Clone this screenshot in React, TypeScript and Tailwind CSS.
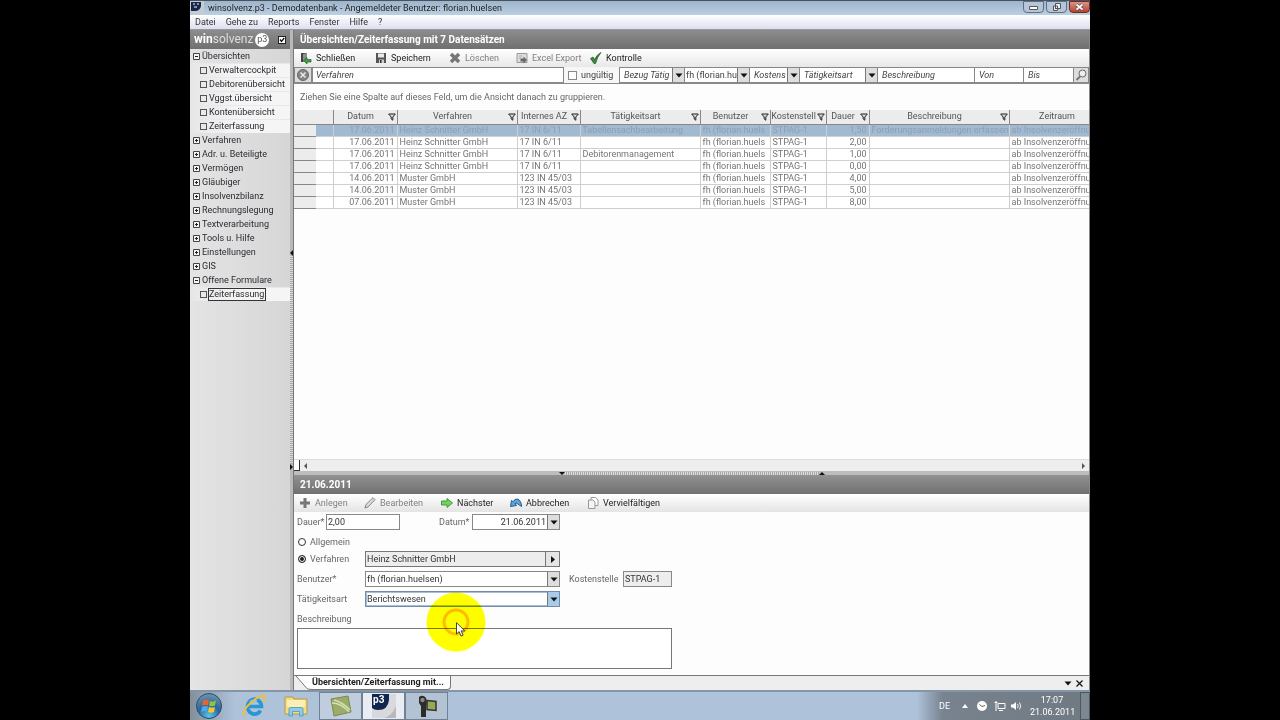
import { ReactNode, useState } from "react";
import clsx from "clsx";

interface NavEntry {
  label: string;
  open?: boolean;
  children?: string[];
}

const navigation: NavEntry[] = [
  {
    label: "Übersichten",
    open: true,
    children: ["Verwaltercockpit", "Debitorenübersicht", "Vggst.übersicht", "Kontenübersicht", "Zeiterfassung"],
  },
  { label: "Verfahren" },
  { label: "Adr. u. Beteiligte" },
  { label: "Vermögen" },
  { label: "Gläubiger" },
  { label: "Insolvenzbilanz" },
  { label: "Rechnungslegung" },
  { label: "Textverarbeitung" },
  { label: "Tools u. Hilfe" },
  { label: "Einstellungen" },
  { label: "GIS" },
  { label: "Offene Formulare", open: true, children: ["Zeiterfassung"] },
];

const columns = [
  { label: "Datum", width: "w-[64px]", filter: true },
  { label: "Verfahren", width: "w-[120px]", filter: true },
  { label: "Internes AZ", width: "w-[63px]", filter: true },
  { label: "Tätigkeitsart", width: "w-[120px]", filter: true },
  { label: "Benutzer", width: "w-[70px]", filter: true },
  { label: "Kostenstell", width: "w-[56px]", filter: true },
  { label: "Dauer", width: "w-[43px]", filter: true },
  { label: "Beschreibung", width: "w-[140px]", filter: true },
  { label: "Zeitraum", width: "w-[97px]", filter: false },
];

const rows = [
  ["17.06.2011", "Heinz Schnitter GmbH", "17 IN 6/11", "Tabellensachbearbeitung", "1,50", "Forderungsanmeldungen erfassen"],
  ["17.06.2011", "Heinz Schnitter GmbH", "17 IN 6/11", "", "2,00", ""],
  ["17.06.2011", "Heinz Schnitter GmbH", "17 IN 6/11", "Debitorenmanagement", "1,00", ""],
  ["17.06.2011", "Heinz Schnitter GmbH", "17 IN 6/11", "", "0,00", ""],
  ["14.06.2011", "Muster GmbH", "123 IN 45/03", "", "4,00", ""],
  ["14.06.2011", "Muster GmbH", "123 IN 45/03", "", "5,00", ""],
  ["07.06.2011", "Muster GmbH", "123 IN 45/03", "", "8,00", ""],
];

const Funnel = () => (
  <svg viewBox="0 0 8 8" className="h-2 w-2 shrink-0">
    <path d="M0.7 1h6.6L4.8 4v3.2L3.2 6V4z" fill="#ddd" stroke="#222" strokeWidth="1" />
  </svg>
);

const Caret = () => (
  <svg viewBox="0 0 8 5" className="h-[5px] w-2">
    <path d="M0.5 0.5h7L4 4.5z" fill="#111" />
  </svg>
);

const TreeBox = ({ open }: { open?: boolean }) => (
  <svg viewBox="0 0 7 7" className="h-[7px] w-[7px] shrink-0">
    <path d="M0.5 0.5h6v6h-6z" fill="#f4f4f4" stroke="#444" />
    <path d={open ? "M2 3.5h3" : "M2 3.5h3M3.5 2v3"} stroke="#222" />
  </svg>
);

const ToolButton = ({ icon, label, disabled, className }: {
  icon: ReactNode;
  label: string;
  disabled?: boolean;
  className?: string;
}) => (
  <button
    type="button"
    disabled={disabled}
    className={clsx("flex shrink-0 items-center gap-1", disabled ? "text-[#808080]" : "text-[#222]", className)}
  >
    {icon}
    {label}
  </button>
);

interface ComboProps {
  id?: string;
  label?: string;
  value: string;
  className?: string;
  arrowClass?: string;
}

const Combo = ({ id, label, value, className, arrowClass }: ComboProps) => (
  <div className={clsx("relative bg-white", className)}>
    <select
      id={id}
      aria-label={label}
      className="block h-full w-full appearance-none overflow-hidden pr-3 pl-px"
      defaultValue={value}
    >
      <option>{value}</option>
    </select>
    <span
      className={clsx(
        "pointer-events-none absolute inset-y-0 right-0 flex w-3 items-center justify-center border-l border-[#777]",
        arrowClass ?? "bg-[#dedede]"
      )}
    >
      <Caret />
    </span>
  </div>
);

const TitleBar = () => (
  <header className="flex h-[15px] shrink-0 items-center border-t border-[#46525c] bg-linear-to-b from-[#9db4cb] to-[#bccfe2] text-[#222]">
    <svg viewBox="0 0 14 14" className="mr-1 h-[14px] w-[14px]">
      <path d="M0 0h14v14H0z" fill="#c3ccd5" />
      <path d="M1 1h10v4q-1 5-6 5H1z" fill="#14264a" />
      <path d="M3 3h2M7 3h2M4 6h3" stroke="#fff" />
    </svg>
    <h1 className="flex-1">winsolvenz.p3 - Demodatenbank - Angemeldeter Benutzer: florian.huelsen</h1>
    <div className="flex h-full items-start gap-[2px]">
      <button type="button" aria-label="Minimieren" className="flex h-3 w-[21px] items-center justify-center rounded-b-sm border border-[#5d6f82] bg-[#b6c6d8]">
        <svg viewBox="0 0 9 5" className="h-[5px] w-[9px]"><path d="M0.5 1.5h8v3h-8z" fill="#fff" stroke="#555" /></svg>
      </button>
      <button type="button" aria-label="Wiederherstellen" className="flex h-3 w-[21px] items-center justify-center rounded-b-sm border border-[#5d6f82] bg-[#b6c6d8]">
        <svg viewBox="0 0 10 10" className="h-[10px] w-[10px]">
          <path d="M3.5 1.5h5v5h-5z M1.5 4h4v4.5h-4z" fill="#eee" stroke="#555" />
          <path d="M3 5.5h1v1.5h-1z" fill="#555" />
        </svg>
      </button>
      <button type="button" aria-label="Schließen" className="flex h-3 w-[21px] items-center justify-center rounded-b-sm border border-[#6d2b25] bg-linear-to-b from-[#dd9286] to-[#b8402f]">
        <svg viewBox="0 0 9 8" className="h-2 w-[9px]">
          <path d="M1.5 1.5l6 5M7.5 1.5l-6 5" stroke="#444" strokeWidth="3" />
          <path d="M1.5 1.5l6 5M7.5 1.5l-6 5" stroke="#fff" strokeWidth="1.8" />
        </svg>
      </button>
    </div>
  </header>
);

const Sidebar = () => (
  <aside className="flex w-[100px] shrink-0 flex-col bg-linear-to-r from-[#e4e4e4] to-[#d6d6d6] text-[#2a2a33]">
    <div className="flex h-[19px] shrink-0 items-center bg-linear-to-b from-[#8c8c8c] to-[#707070] pl-1 text-[12px] text-[#ddd]">
      <b className="text-white">win</b>solvenz
      <span className="ml-[2px] flex h-[14px] w-[14px] items-center justify-center rounded-full bg-white text-[9px] text-[#555]">p3</span>
      <span className="relative mr-1 ml-auto h-2 w-2">
        <input
          type="checkbox"
          defaultChecked
          aria-label="Navigation fixieren"
          className="peer block h-2 w-2 appearance-none border border-[#222] bg-white"
        />
        <svg viewBox="0 0 8 8" className="pointer-events-none absolute inset-0 hidden h-2 w-2 peer-checked:block">
          <path d="M2 3.5l1.5 2L6.2 2" fill="none" stroke="#111" strokeWidth="1.3" />
        </svg>
      </span>
    </div>
    <nav>
      {navigation.map((entry) => (
        <div key={entry.label}>
          <a href="#" className="flex h-[14px] items-center gap-[2px] pl-[3px]">
            <TreeBox open={entry.open} />
            {entry.label}
          </a>
          {entry.children?.map((child) => (
            <a
              key={child}
              href="#"
              className="flex h-[14px] items-center gap-px border-t border-[#e8e8e8] bg-linear-to-r from-[#e6e6e6] via-[#f5f5f5] to-[#f5f5f5] pl-[10px]"
            >
              <span className="h-[7px] w-[7px] shrink-0 border border-[#555]" />
              <span
                className={clsx("border leading-[11px]", entry.label === "Offene Formulare" ? "border-[#333] pr-px" : "border-transparent")}
              >
                {child}
              </span>
            </a>
          ))}
        </div>
      ))}
    </nav>
  </aside>
);

const VerticalSplitter = () => (
  <div className="flex w-1 shrink-0 flex-col items-end border-r border-[#777] bg-[#b9b9b9]">
    <div className="flex-1" />
    <svg viewBox="0 0 3 6" className="h-[6px] w-[3px]"><path d="M3 0v6L0 3z" fill="#111" /></svg>
    <div className="w-[3px] basis-[208px] bg-[repeating-linear-gradient(to_bottom,#dcdcdc_0_1px,#a8a8a8_1px_2px)]" />
    <svg viewBox="0 0 3 6" className="h-[6px] w-[3px]"><path d="M0 0v6l3-3z" fill="#111" /></svg>
    <div className="flex-1" />
  </div>
);

const HorizontalSplitter = () => (
  <div className="flex h-1 shrink-0 items-center justify-center bg-[#bdbdbd]">
    <svg viewBox="0 0 6 3" className="h-[3px] w-[6px]"><path d="M0 0h6L3 3z" fill="#111" /></svg>
    <div className="h-[3px] w-[254px] bg-[repeating-linear-gradient(to_right,#dcdcdc_0_1px,#a8a8a8_1px_2px)]" />
    <svg viewBox="0 0 6 3" className="h-[3px] w-[6px]"><path d="M0 3h6L3 0z" fill="#111" /></svg>
  </div>
);

const FilterBar = () => (
  <div className="flex h-[17px] shrink-0 items-stretch border-b border-[#8a8a8a] bg-[#f7f7f7] text-[#444]">
    <button type="button" aria-label="Filter löschen" className="flex w-[18px] shrink-0 items-center justify-center border border-[#888] bg-[#ddd]">
      <svg viewBox="0 0 12 12" className="h-3 w-3">
        <circle cx="6" cy="6" r="5.5" fill="#858585" stroke="#666" />
        <path d="M3.5 3.5l5 5M8.5 3.5l-5 5" stroke="#e8e8e8" strokeWidth="1.5" />
      </svg>
    </button>
    <input aria-label="Verfahren" placeholder="Verfahren" className="w-[252px] min-w-0 border border-[#888] bg-white px-[3px] italic placeholder:text-[#444]" />
    <label className="flex w-[55px] shrink-0 items-center gap-1 pl-1">
      <input type="checkbox" className="h-[9px] w-[9px] appearance-none border border-[#888] bg-white" />
      ungültig
    </label>
    <Combo label="Bezug Tätigkeit" value="Bezug Tätig" className="w-[66px] shrink-0 border border-[#888] pl-[3px] italic" />
    <Combo label="Benutzer" value="fh (florian.huelsen)" className="w-[65px] shrink-0 border-y border-r border-[#888]" />
    <Combo label="Kostenstelle" value="Kostens" className="w-[50px] shrink-0 border-y border-r border-[#888] pl-[3px] italic" />
    <Combo label="Tätigkeitsart" value="Tätigkeitsart" className="w-[78px] shrink-0 border-y border-r border-[#888] pl-[3px] italic" />
    <input aria-label="Beschreibung" placeholder="Beschreibung" className="w-[96px] min-w-0 grow border-y border-r border-[#888] bg-white px-1 italic placeholder:text-[#444]" />
    <input aria-label="Von" placeholder="Von" className="w-[49px] min-w-0 border-y border-r border-[#888] bg-white px-1 italic placeholder:text-[#444]" />
    <input aria-label="Bis" placeholder="Bis" className="w-[49px] min-w-0 border-y border-[#888] bg-white px-1 italic placeholder:text-[#444]" />
    <button type="button" aria-label="Suchen" className="flex w-4 shrink-0 items-center justify-center border border-[#888] bg-[#ddd]">
      <svg viewBox="0 0 12 12" className="h-3 w-3">
        <path d="M5 7.5L1.5 11" stroke="#777" strokeWidth="2" />
        <circle cx="7.5" cy="4.5" r="3.5" fill="#eee" stroke="#666" />
      </svg>
    </button>
  </div>
);

const EntryTable = () => (
  <table className="w-[812px] table-fixed border-collapse text-[#747474]">
    <thead>
      <tr className="h-[14px] bg-[#ececec] text-[#555]">
        <th className="w-[22px] border-b border-[#888]" aria-label="Markierung" />
        <th className="w-[17px] border-r border-b border-[#888]" aria-label="Status" />
        {columns.map((column) => (
          <th key={column.label} className={clsx(column.width, "border-r border-b border-[#888] p-0 font-normal")}>
            <div className="flex items-center overflow-hidden pr-px whitespace-nowrap">
              <span className="flex-1 text-center">{column.label}</span>
              {column.filter && <Funnel />}
            </div>
          </th>
        ))}
      </tr>
    </thead>
    <tbody>
      {rows.map(([date, caseName, reference, activity, duration, description], index) => {
        const cell = "overflow-hidden border-r border-b border-[#cfcfcf] px-[2px] py-0 whitespace-nowrap";
        return (
          <tr key={index} className={clsx("h-3", index === 0 ? "bg-[#a2b9d2] text-[#8d9fb4]" : "bg-white")}>
            <td className="border-b border-[#888] bg-[#ececec] p-0" />
            <td className={cell} />
            <td className={clsx(cell, "text-right")}>{date}</td>
            <td className={cell}>{caseName}</td>
            <td className={cell}>{reference}</td>
            <td className={cell}>{activity}</td>
            <td className={cell}>fh (florian.huels</td>
            <td className={cell}>STPAG-1</td>
            <td className={clsx(cell, "text-right")}>{duration}</td>
            <td className={cell}>{description}</td>
            <td className={cell}>ab Insolvenzeröffnung</td>
          </tr>
        );
      })}
    </tbody>
  </table>
);

const Overview = () => (
  <section className="flex min-h-0 flex-1 flex-col">
    <h2 className="flex h-[19px] shrink-0 items-center bg-linear-to-b from-[#8c8c8c] to-[#707070] px-[6px] text-[10px] font-bold text-white">
      Übersichten/Zeiterfassung mit 7 Datensätzen
    </h2>
    <div className="flex h-[18px] shrink-0 items-center bg-linear-to-b from-white to-[#e8e8e8] pl-[6px]">
      <ToolButton
        label="Schließen"
        className="w-[75px]"
        icon={
          <svg viewBox="0 0 12 12" className="h-3 w-3">
            <path d="M1 1h6v9H1z" fill="#444" />
            <path d="M3 2l4-1v8l-4 1z" fill="#8f8f8f" />
            <path d="M11 10H7V12L3.5 8.5 7 5.5V7.5h4z" fill="#3fa045" stroke="#1e6325" strokeWidth="0.7" />
          </svg>
        }
      />
      <ToolButton
        label="Speichern"
        className="w-[74px]"
        icon={
          <svg viewBox="0 0 12 12" className="h-3 w-3">
            <path d="M1 1h10v10H1z" fill="#555" />
            <path d="M3 1.5h6v4H3z" fill="#e8e8e8" />
            <path d="M4 7.5h5V11H4z" fill="#ccc" />
            <path d="M5 8h1.5v3H5z" fill="#333" />
          </svg>
        }
      />
      <ToolButton
        disabled
        label="Löschen"
        className="w-[67px]"
        icon={
          <svg viewBox="0 0 12 12" className="h-3 w-3">
            <path d="M2 2l8 8M10 2l-8 8" stroke="#777" strokeWidth="3.5" />
          </svg>
        }
      />
      <ToolButton
        disabled
        label="Excel Export"
        className="w-[74px]"
        icon={
          <svg viewBox="0 0 12 12" className="h-3 w-3">
            <path d="M1 1.5h10v9H1z" fill="#ddd" stroke="#999" />
            <path d="M3 4h3M3 6h2" stroke="#aaa" />
            <path d="M4.5 6.5h3V4.5L11 8l-3.5 3.5v-2h-3z" fill="#666" />
          </svg>
        }
      />
      <ToolButton
        label="Kontrolle"
        icon={
          <svg viewBox="0 0 12 12" className="h-3 w-3">
            <path d="M0.5 6.5L3 5l1.5 2.5Q7 2.5 11 0.5q-3.5 4-5.5 11H4z" fill="#3d8a3d" stroke="#1f4f22" strokeWidth="0.7" />
          </svg>
        }
      />
    </div>
    <FilterBar />
    <p className="flex h-[26px] shrink-0 items-center px-[6px] text-[#666]">
      Ziehen Sie eine Spalte auf dieses Feld, um die Ansicht danach zu gruppieren.
    </p>
    <div className="min-h-0 flex-1 overflow-hidden">
      <EntryTable />
    </div>
    <div className="flex h-3 shrink-0 items-center border-t border-[#ddd] bg-[#eee] pr-1">
      <span className="h-full w-[6px] border-r border-b border-[#333] bg-white" />
      <svg viewBox="0 0 3 6" className="ml-1 h-[6px] w-[3px]"><path d="M3 0v6L0 3z" fill="#555" /></svg>
      <span className="flex-1" />
      <svg viewBox="0 0 3 6" className="h-[6px] w-[3px]"><path d="M0 0v6l3-3z" fill="#555" /></svg>
    </div>
  </section>
);

const PointerHighlight = () => (
  <>
    <svg viewBox="0 0 60 60" className="pointer-events-none absolute top-[80px] left-[132px] h-[60px] w-[60px] mix-blend-multiply">
      <circle cx="30" cy="30" r="29.5" fill="#ffff00" />
      <circle cx="30" cy="30" r="12" fill="none" stroke="#ffbe00" strokeWidth="3" />
    </svg>
    <svg viewBox="0 0 10 15" className="pointer-events-none absolute top-[110px] left-[162px] h-[15px] w-[10px]">
      <path d="M0.5 0.7v11.3l2.6-2.4 2 4.5 2-0.9-2-4.3h3.7z" fill="#fff" stroke="#333" strokeWidth="0.9" />
    </svg>
  </>
);

const EntryForm = () => {
  const [scope, setScope] = useState<"allgemein" | "verfahren">("verfahren");
  const radio = "h-2 w-2 appearance-none rounded-full border border-[#333] bg-white checked:bg-[#222] checked:shadow-[inset_0_0_0_1px_white]";

  return (
    <form className="relative flex flex-col bg-[#fdfdfd] px-[3px] pt-[2px] pb-[6px] text-[#666]">
      <div className="flex h-4 items-center">
        <label htmlFor="dauer" className="w-[29px]">Dauer*</label>
        <input id="dauer" defaultValue="2,00" className="h-4 w-[74px] border border-[#888] bg-white px-px text-[#333]" />
        <label htmlFor="datum" className="ml-[39px] w-[33px]">Datum*</label>
        <div className="flex h-4 w-[88px] border border-[#888] bg-white">
          <input id="datum" defaultValue="21.06.2011" className="min-w-0 flex-1 px-px text-right text-[#333]" />
          <button type="button" aria-label="Kalender öffnen" className="flex w-3 items-center justify-center border-l border-[#777] bg-[#dedede]">
            <Caret />
          </button>
        </div>
      </div>
      <label className="mt-1 flex h-4 items-center gap-1 pl-px">
        <input type="radio" name="scope" className={radio} checked={scope === "allgemein"} onChange={() => setScope("allgemein")} />
        Allgemein
      </label>
      <div className="mt-px flex h-4 items-center">
        <label className="flex w-[68px] items-center gap-1 pl-px">
          <input type="radio" name="scope" className={radio} checked={scope === "verfahren"} onChange={() => setScope("verfahren")} />
          Verfahren
        </label>
        <div className="flex h-4 w-[195px] border border-[#777] bg-[#ededed]">
          <input aria-label="Verfahren" readOnly defaultValue="Heinz Schnitter GmbH" className="min-w-0 flex-1 px-px text-[#333]" />
          <button type="button" aria-label="Verfahren wählen" className="flex w-[14px] items-center justify-center border-l border-[#777] bg-[#e4e4e4]">
            <svg viewBox="0 0 4 7" className="h-[7px] w-1"><path d="M0 0v7l4-3.5z" fill="#111" /></svg>
          </button>
        </div>
      </div>
      <div className="mt-1 flex h-4 items-center">
        <label htmlFor="benutzer" className="w-[68px]">Benutzer*</label>
        <Combo id="benutzer" value="fh (florian.huelsen)" className="h-4 w-[195px] border border-[#888] text-[#333]" />
        <label htmlFor="kostenstelle" className="ml-[9px] w-[54px]">Kostenstelle</label>
        <input id="kostenstelle" readOnly defaultValue="STPAG-1" className="h-4 w-[49px] border border-[#888] bg-[#ededed] px-px text-[#333]" />
      </div>
      <div className="mt-1 flex h-4 items-center">
        <label htmlFor="taetigkeitsart" className="w-[68px]">Tätigkeitsart</label>
        <Combo
          id="taetigkeitsart"
          value="Berichtswesen"
          className="h-4 w-[195px] border border-[#6f8dab] text-[#333] outline -outline-offset-2 outline-[#a9bfd6]"
          arrowClass="bg-[#a9cbe8]"
        />
      </div>
      <label htmlFor="beschreibung" className="mt-1 flex h-4 items-center">Beschreibung</label>
      <textarea id="beschreibung" className="mt-px h-[41px] w-[375px] resize-none border border-[#777] bg-white px-[2px]" />
      <PointerHighlight />
    </form>
  );
};

const Detail = () => (
  <section className="shrink-0">
    <h2 className="flex h-[19px] items-center bg-linear-to-b from-[#929292] to-[#707070] px-[6px] text-[10px] font-bold text-white">21.06.2011</h2>
    <div className="flex h-[18px] items-center bg-linear-to-b from-white to-[#e4e4e4] pl-[5px]">
      <ToolButton
        disabled
        label="Anlegen"
        className="w-[65px]"
        icon={<svg viewBox="0 0 12 12" className="h-3 w-3"><path d="M4.500 1h3v3.500H11v3H7.500V11h-3V7.500H1v-3h3.500z" fill="#777" /></svg>}
      />
      <ToolButton
        disabled
        label="Bearbeiten"
        className="w-[77px]"
        icon={
          <svg viewBox="0 0 12 12" className="h-3 w-3">
            <path d="M1 11l1-3.5L9 0.7l2 2L4.2 9.8z" fill="#ddd" stroke="#777" strokeWidth="0.9" />
          </svg>
        }
      />
      <ToolButton
        label="Nächster"
        className="w-[69px]"
        icon={
          <svg viewBox="0 0 12 12" className="h-3 w-3">
            <path d="M0.5 4h5.5V1.5L11.5 6 6 10.5V8H0.5z" fill="#6fd45c" stroke="#3a8f35" strokeWidth="0.9" />
          </svg>
        }
      />
      <ToolButton
        label="Abbrechen"
        className="w-[77px]"
        icon={
          <svg viewBox="0 0 12 12" className="h-3 w-3">
            <path d="M0.5 9.500L1.500 3.500l1.500 1.200Q5 1 8 2.200q3 1.300 3.700 7.300L8.500 7.500Q6.500 5.500 5 6.500l1.500 2z" fill="#5ba3dc" stroke="#1f4f7d" strokeWidth="0.9" />
          </svg>
        }
      />
      <ToolButton
        label="Vervielfältigen"
        icon={
          <svg viewBox="0 0 12 12" className="h-3 w-3">
            <path d="M4 0.500h4.500L11 3v5.500H4z" fill="#fff" stroke="#999" />
            <path d="M1.500 3h4.500l2 2v6.500H1.500z" fill="#f4f4f4" stroke="#999" />
          </svg>
        }
      />
    </div>
    <EntryForm />
  </section>
);

const TabStrip = () => (
  <div className="flex h-[15px] shrink-0 items-stretch border-t border-[#777] bg-[#eee] text-[#222]">
    <svg viewBox="0 0 18 14" className="h-[14px] w-[18px]">
      <path d="M2 0L13 12.5H18V0z" fill="#fff" />
      <path d="M2 0L13 12.5Q14 13.5 18 13.5" fill="none" stroke="#777" />
    </svg>
    <button type="button" className="rounded-br-sm border-r border-b border-[#777] bg-white pr-[6px] font-bold">
      Übersichten/Zeiterfassung mit...
    </button>
    <span className="flex-1" />
    <button type="button" aria-label="Fensterliste" className="flex items-center"><Caret /></button>
    <button type="button" aria-label="Register schließen" className="flex items-center pr-[6px] pl-1">
      <svg viewBox="0 0 7 7" className="h-[7px] w-[7px]"><path d="M0.5 0.5l6 6M6.5 0.5l-6 6" stroke="#111" strokeWidth="1.2" /></svg>
    </button>
  </div>
);

const Taskbar = () => {
  const task = "flex h-7 w-[43px] items-center justify-center border border-[#6e8196]";
  return (
    <footer className="flex h-7 shrink-0 items-center bg-[#aec2da]">
      <div className="flex h-full w-[45px] items-center bg-linear-to-r from-[#848f9b] to-[#aec2da] pl-[6px]">
        <button type="button" aria-label="Start">
          <svg viewBox="0 0 26 26" className="h-[26px] w-[26px]">
            <defs>
              <radialGradient id="orb" cx="50%" cy="90%" r="90%">
                <stop offset="0" stopColor="#5cc7ec" />
                <stop offset="0.5" stopColor="#27679e" />
                <stop offset="1" stopColor="#7795ad" />
              </radialGradient>
            </defs>
            <circle cx="13" cy="13" r="12.5" fill="url(#orb)" stroke="#2b4a66" />
            <path d="M7 8q3-2 6-0.5l-1 5q-3-1-6 0.5z" fill="#e8642c" />
            <path d="M14 8q3 1.5 6-0.5l-1 5q-3 1.5-6 0z" fill="#8cc63f" />
            <path d="M6 14q3-1.5 6-0.5l-1 5q-3-1-6 0.5z" fill="#4fa9e4" />
            <path d="M13 14q3 1.5 6 0l-1 5q-3 1.5-6 0z" fill="#fbc52d" />
          </svg>
        </button>
      </div>
      <button type="button" aria-label="Internet Explorer" className="flex w-[42px] items-center justify-center pr-1">
        <svg viewBox="0 0 24 24" className="h-6 w-6">
          <path d="M18.500 16.500A7 7.500 0 1 1 19.500 12.500H7" fill="none" stroke="#2b96d4" strokeWidth="3.600" />
          <path d="M8 8q3-3 7-1" fill="none" stroke="#8fd3f4" strokeWidth="1.200" />
          <path d="M3 22Q-1 18 8 9.500T22 2q2 2-1 6" fill="none" stroke="#f0bf3a" strokeWidth="2" />
        </svg>
      </button>
      <button type="button" aria-label="Explorer" className="flex w-[42px] items-center justify-center pr-1">
        <svg viewBox="0 0 24 22" className="h-[22px] w-6">
          <path d="M1 2h8l1 2h13v15H1z" fill="#f1dc84" stroke="#b69c46" />
          <path d="M3 5h18v7H3z" fill="#fbf0b4" />
          <path d="M5 21v-7q0-1.5 1.5-1.5h11q1.5 0 1.5 1.5v7h-3.5v-4.5h-7V21z" fill="#8ccbea" stroke="#5295bd" strokeWidth="0.8" />
        </svg>
      </button>
      <div className="flex">
        <button type="button" aria-label="Notizen" className={clsx(task, "bg-[#bfcddd]")}>
          <svg viewBox="0 0 24 24" className="h-6 w-6">
            <path d="M2 5l17-3 3 16-17 4z" fill="#9bab68" stroke="#7c8a50" />
            <path d="M3 9q9 0 17 9M5 6q8 2 16 10" fill="none" stroke="#d8e0b4" strokeWidth="1.5" />
          </svg>
        </button>
        <button type="button" aria-label="winsolvenz.p3" className={clsx(task, "bg-[#e9edf2]")}>
          <svg viewBox="0 0 24 24" className="h-6 w-6">
            <path d="M0 0h24v24H0z" fill="#d7d9dc" />
            <path d="M0 0h17v6q-1 10-11 10-4 0-6-2z" fill="#10264f" />
            <path d="M12 24q8-2 12-12v12z" fill="#b8b8b8" />
            <text x="1" y="9" fontSize="10" fontWeight="bold" fill="#fff">p3</text>
          </svg>
        </button>
        <button type="button" aria-label="Kamera" className={clsx(task, "bg-[#b4c3d4]")}>
          <svg viewBox="0 0 24 24" className="h-6 w-6">
            <path d="M4 3q4-3 7 1l1 4-1 5v10H6V12L4 9z" fill="#2c2c2c" />
            <circle cx="7.500" cy="6" r="2.200" fill="#888" />
            <path d="M12 6.500l9 1v9l-9-1z" fill="#98a855" stroke="#333" strokeWidth="1.500" />
          </svg>
        </button>
      </div>
      <div className="flex-1" />
      <div className="flex h-full items-center bg-linear-to-r from-[#aec2da] via-[#78838f] via-15% to-[#6f7982] pl-[22px] text-white">
        <span>DE</span>
        <svg viewBox="0 0 6 4" className="ml-3 h-1 w-[6px]"><path d="M0 4h6L3 0z" fill="#fff" /></svg>
        <svg viewBox="0 0 12 12" className="ml-2 h-3 w-3">
          <circle cx="6" cy="6" r="5" fill="#fff" />
          <path d="M3.5 4.5L6 6.5l3-1" fill="none" stroke="#666" />
        </svg>
        <svg viewBox="0 0 12 12" className="ml-[6px] h-3 w-3">
          <path d="M4 3.500h7v5H4zM5 10.500h4M2 1v10M0.500 2.500h3" fill="none" stroke="#fff" />
        </svg>
        <svg viewBox="0 0 12 12" className="ml-1 h-3 w-3">
          <path d="M1 4.500h2L6 2v8L3 7.500H1z" fill="#fff" />
          <path d="M7.500 4q1.500 2 0 4M9.500 2.500q2.500 3.500 0 7" fill="none" stroke="#fff" strokeWidth="0.900" />
        </svg>
        <div className="mr-[6px] ml-2 w-[44px] text-center leading-3 whitespace-nowrap">
          <div>17:07</div>
          <div>21.06.2011</div>
        </div>
        <button type="button" aria-label="Desktop anzeigen" className="h-full w-[10px] border border-[#4d565f] bg-[#7d8791]" />
      </div>
    </footer>
  );
};

export default function App() {
  return (
    <div className="flex h-screen justify-center bg-black">
      <div className="flex aspect-[5/4] h-full flex-col overflow-hidden bg-white font-[Roboto,sans-serif] text-[9px] leading-[11px]">
        <TitleBar />
        <nav className="flex h-[15px] shrink-0 items-center gap-[10px] border-b border-[#999] bg-linear-to-b from-white to-[#dcdff0] px-[5px] text-[#333]">
          {["Datei", "Gehe zu", "Reports", "Fenster", "Hilfe", "?"].map((item) => (
            <a key={item} href="#">{item}</a>
          ))}
        </nav>
        <div className="flex min-h-0 flex-1">
          <Sidebar />
          <VerticalSplitter />
          <main className="flex min-w-0 flex-1 flex-col border-r border-[#888] bg-[#fdfdfd]">
            <Overview />
            <HorizontalSplitter />
            <Detail />
            <TabStrip />
          </main>
        </div>
        <div className="h-[2px] shrink-0 bg-[#8495a8]" />
        <Taskbar />
      </div>
    </div>
  );
}
